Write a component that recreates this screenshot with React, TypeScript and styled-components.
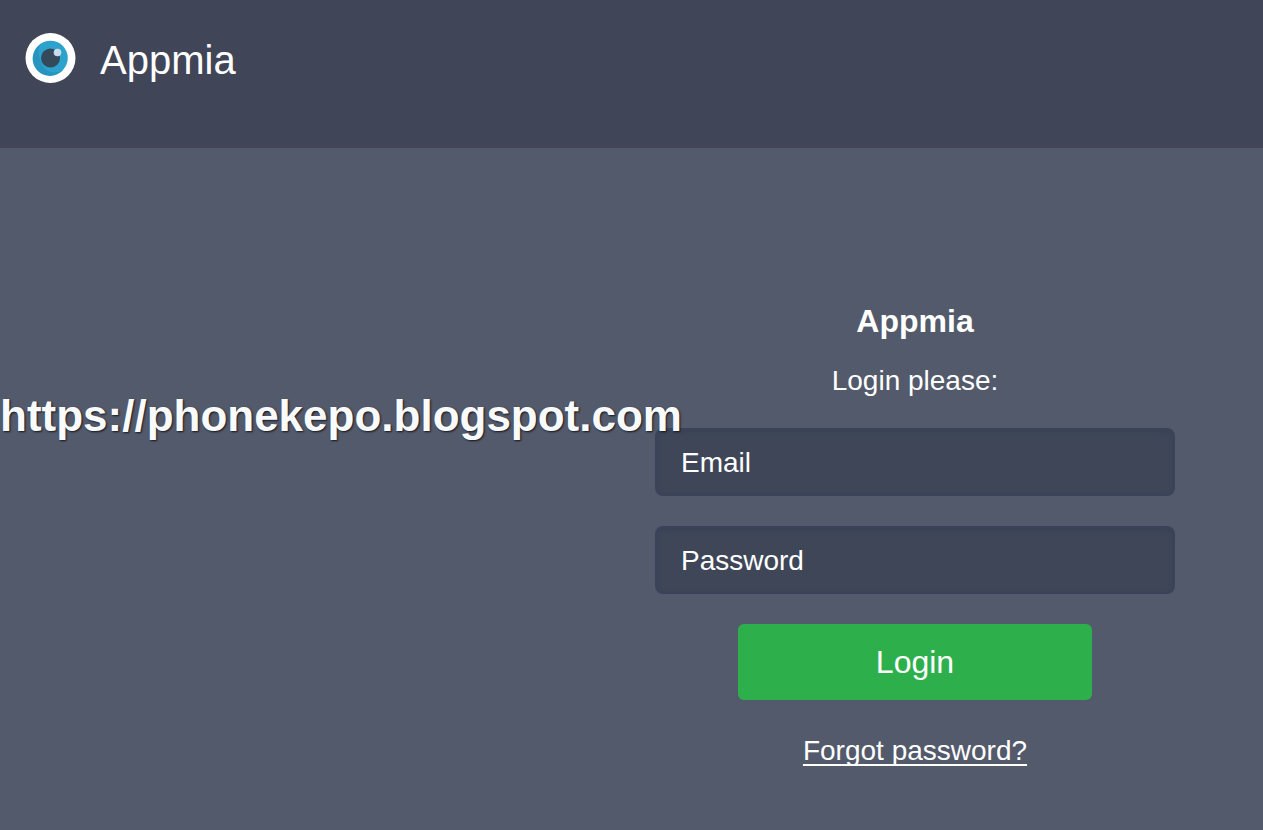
import React from "react";
import styled, { createGlobalStyle } from "styled-components";

const GlobalStyle = createGlobalStyle`
  *, *::before, *::after {
    box-sizing: border-box;
  }

  body {
    margin: 0;
    background: #535a6b;
    color: #ffffff;
    font-family: "Liberation Sans", Arial, Helvetica, sans-serif;
    font-size: 28px;
    line-height: 32px;
  }
`;

const Page = styled.div`
  display: flex;
  flex-direction: column;
  min-height: 100vh;
`;

const Header = styled.header`
  height: 148px;
  padding: 32px 24px;
  background: #404557;
`;

const Brand = styled.a`
  display: inline-flex;
  align-items: flex-start;
  gap: 24px;
  color: inherit;
  font-size: 40px;
  line-height: 56px;
  text-decoration: none;
`;

const Main = styled.main`
  position: relative;
  display: flex;
  flex: 1;
  justify-content: flex-end;
  padding: 152px 88px 60px;
`;

const Watermark = styled.p`
  position: absolute;
  top: 242px;
  left: 0;
  z-index: 1;
  margin: 0;
  color: #f9fafb;
  font-size: 44px;
  font-weight: 700;
  line-height: 52px;
  text-shadow: 1px 1px 2px #14161d;
  white-space: nowrap;
  pointer-events: none;
`;

const LoginForm = styled.form`
  display: flex;
  flex-direction: column;
  align-items: center;
  width: 100%;
  max-width: 520px;
`;

const Title = styled.h1`
  margin: 0 0 23px;
  font-size: 32px;
  line-height: 42px;
`;

const Prompt = styled.p`
  margin: 0 0 31px;
`;

const Field = styled.input`
  width: 100%;
  height: 68px;
  margin-bottom: 30px;
  padding: 2px 24px 0;
  border: 2px solid #3b435a;
  border-radius: 8px;
  background: #3e4658;
  box-shadow: inset 0 2px 4px #3a4256;
  color: inherit;
  font: inherit;

  &::placeholder {
    color: #ffffff;
    opacity: 1;
  }
`;

const SubmitButton = styled.button`
  width: 68%;
  height: 76px;
  margin-bottom: 35px;
  border: 0;
  border-radius: 6px;
  background: #2db04b;
  color: inherit;
  font-family: inherit;
  font-size: 32px;
  cursor: pointer;
`;

const ForgotLink = styled.a`
  color: inherit;
  text-decoration-thickness: 2px;
  text-decoration-skip-ink: none;
  text-underline-offset: 4px;
`;

const EyeLogo = () => (
  <svg width="52" height="52" viewBox="0 0 52 52" aria-hidden="true">
    <circle cx="26.5" cy="26" r="25" fill="#ffffff" />
    <circle cx="26.5" cy="26" r="17.3" fill="#2ba3cc" />
    <path
      d="M16 12.5A17.3 17.3 0 1 0 39 38C31 43 22 40 18 33C14 26 14 18 16 12.5Z"
      fill="#2795bf"
    />
    <circle cx="26.5" cy="26" r="9.5" fill="#34495a" />
    <circle cx="33.5" cy="20.5" r="3.8" fill="#c9dceb" />
  </svg>
);

export default function App() {
  return (
    <>
      <GlobalStyle />
      <Page>
        <Header>
          <Brand href="#">
            <EyeLogo />
            Appmia
          </Brand>
        </Header>
        <Main>
          <Watermark>https://phonekepo.blogspot.com</Watermark>
          <LoginForm onSubmit={(event) => event.preventDefault()}>
            <Title>Appmia</Title>
            <Prompt>Login please:</Prompt>
            <Field type="email" placeholder="Email" aria-label="Email" />
            <Field type="password" placeholder="Password" aria-label="Password" />
            <SubmitButton type="submit">Login</SubmitButton>
            <ForgotLink href="#">Forgot password?</ForgotLink>
          </LoginForm>
        </Main>
      </Page>
    </>
  );
}
